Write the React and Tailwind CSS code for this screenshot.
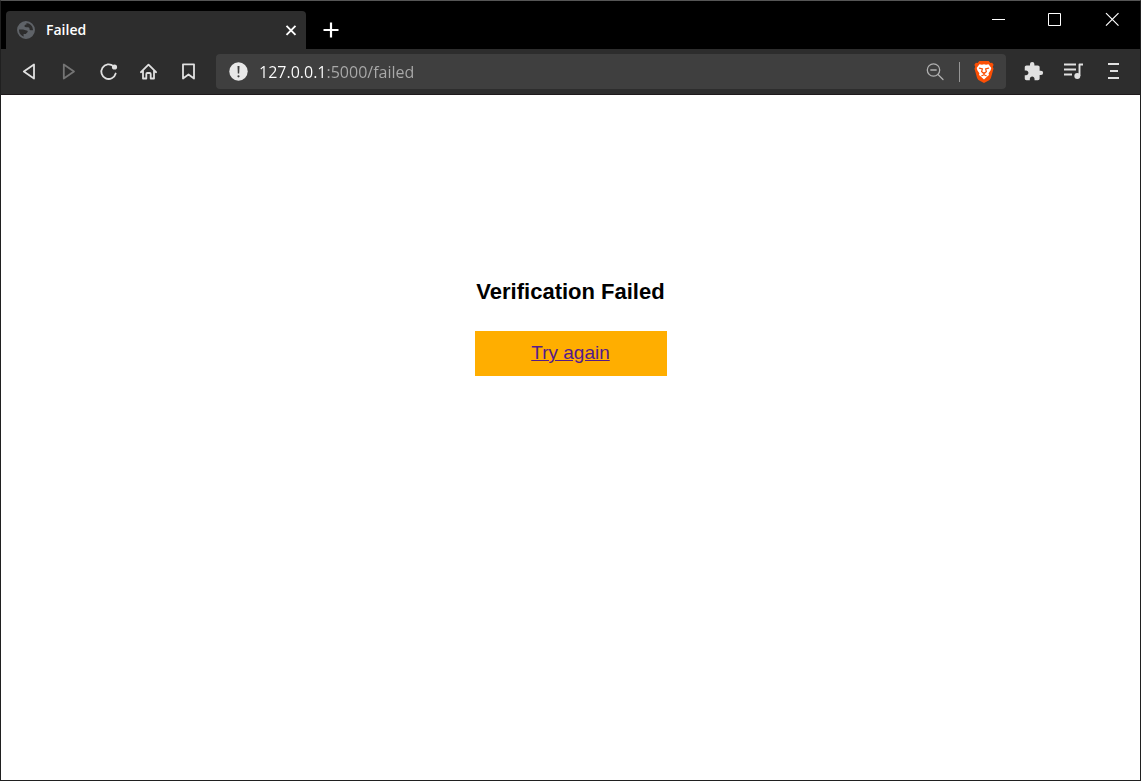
import { MdExtension } from "react-icons/md";

const toolButton = "flex h-9 w-10 shrink-0 items-center justify-center text-[#e0e0e0]";

function Icon({ children }) {
  return (
    <svg
      width="20"
      height="20"
      viewBox="0 0 20 20"
      fill="none"
      stroke="currentColor"
      strokeWidth="1.8"
      strokeLinejoin="round"
      strokeLinecap="round"
      aria-hidden="true"
    >
      {children}
    </svg>
  );
}

function GlobeIcon() {
  return (
    <svg width="20" height="20" viewBox="0 0 20 20" fill="none" aria-hidden="true">
      <circle cx="10" cy="10" r="8" stroke="#5f6368" strokeWidth="1.900" />
      <path
        fill="#5f6368"
        d="M10.500 1.800C5.500 1.500 2 5 1.900 9.600H7c1.500 0 2.200 1 3.600 1 1.200 0 1.500.9.800 1.700L9.800 14H7.600v3.600c3.800 1.300 8.500-.8 10-4.700l.4-2.700h-3.500c-.8 0-1-.7-1-1.400 0-1.100-1-1.500-2.300-1.500-1.600 0-2.700-.3-2.700-1.400 0-1 .9-1.500 2-1.500z"
      />
    </svg>
  );
}

function TitleBar() {
  return (
    <div className="flex h-12 justify-between bg-black pl-[5px] text-white">
      <div className="flex items-end">
        <div className="flex h-[38px] w-[300px] items-center rounded-t bg-[#2d2d2d] pl-2.5 pr-1.5">
          <GlobeIcon />
          <span className="ml-2.5 flex-1 text-sm font-semibold">Failed</span>
          <button type="button" aria-label="Close tab" className="flex size-5 items-center justify-center">
            <Icon>
              <path d="M6.500 5.800l9 9M15.500 5.800l-9 9" strokeWidth="1.900" strokeLinecap="butt" />
            </Icon>
          </button>
        </div>
        <button type="button" aria-label="New tab" className="ml-[15px] flex h-[38px] w-5 items-center justify-center">
          <Icon>
            <path d="M10 2.500v15M2.500 10h15" strokeWidth="2.200" strokeLinecap="butt" />
          </Icon>
        </button>
      </div>
      <div className="flex h-[36px]">
        <button type="button" aria-label="Minimize" className="flex w-14 items-center justify-center">
          <svg width="16" height="16" viewBox="0 0 16 16" aria-hidden="true">
            <path d="M0 8.500h13" stroke="currentColor" />
          </svg>
        </button>
        <button type="button" aria-label="Maximize" className="flex w-14 items-center justify-center">
          <svg width="16" height="16" viewBox="0 0 16 16" fill="none" aria-hidden="true">
            <path d="M.5 2.500h12v12h-12z" stroke="currentColor" />
          </svg>
        </button>
        <button type="button" aria-label="Close window" className="flex w-14 items-center justify-center">
          <svg width="16" height="16" viewBox="0 0 16 16" fill="none" aria-hidden="true">
            <path d="M2 2.200l12.500 12.500M14.500 2.200L2 14.700" stroke="currentColor" strokeWidth="1.200" />
          </svg>
        </button>
      </div>
    </div>
  );
}

function BraveLogo() {
  return (
    <svg width="20" height="24" viewBox="0 0 20 24" aria-hidden="true">
      <path
        fill="#fb4f05"
        d="M5.300 1h9.400l1.700 1.900 1.700-.2 1.500 2-.8 2 .7 2-2.600 9.300-1.300 2L10 23 4.400 20l-1.300-2L.5 8.700l.7-2-.8-2 1.500-2 1.700.2z"
      />
      <path
        fill="#fff"
        d="M5.500 4.300L8 4.800l2-.6 2 .6 2.500-.5L17.300 8l-.8 2.400-1.900 2.900.4 1.700-1.800 1.500L10 19.400l-3.200-2.900L5 15l.4-1.700-1.900-2.900L2.700 8z"
      />
      <path
        fill="none"
        stroke="#fb4f05"
        strokeWidth="1.200"
        strokeLinecap="round"
        d="M5.400 8.200l3 .8-.8 2.500 1.600 1.500M14.600 8.200l-3 .8.8 2.500-1.600 1.500M10 12.600v2M7.800 15.700L10 14.800l2.200.9"
      />
    </svg>
  );
}

function Toolbar() {
  return (
    <div className="flex h-[46px] items-center border-b border-[#1e191b] bg-[#2d2d2d] px-[7px]">
      <button type="button" aria-label="Back" className={toolButton}>
        <Icon>
          <path d="M16 2.500v14L5.800 9.500z" />
        </Icon>
      </button>
      <button
        type="button"
        aria-label="Forward"
        disabled
        className="flex h-9 w-10 shrink-0 items-center justify-center text-[#757575]"
      >
        <Icon>
          <path d="M5.800 2.500v14L16 9.500z" />
        </Icon>
      </button>
      <button type="button" aria-label="Reload" className={toolButton}>
        <Icon>
          <path d="M15.500 4.200A7.300 7.300 0 1 0 17.700 11.500" />
          <circle cx="16.500" cy="5" r="2.600" fill="currentColor" stroke="none" />
        </Icon>
      </button>
      <button type="button" aria-label="Home" className={toolButton}>
        <Icon>
          <path d="M5 8.500L2.900 10.200 10.500 2.600l7.600 7.600L16 8.500V16.500h-3.300V12a1 1 0 0 0-1-1H9.300a1 1 0 0 0-1 1v4.500H5V9" />
        </Icon>
      </button>
      <button type="button" aria-label="Bookmark this page" className={toolButton}>
        <Icon>
          <path d="M5 2.300h11v14.200L10.500 12.500 5 16.500z" />
        </Icon>
      </button>
      <div className="ml-2 mr-[7px] flex h-[35px] min-w-0 flex-1 items-center rounded bg-[#3f3f3f] px-3">
        <button type="button" aria-label="View site information" className="shrink-0 text-[#e8e8e8]">
          <svg width="20" height="20" viewBox="0 0 20 20" aria-hidden="true">
            <circle cx="10.500" cy="9.500" r="9.200" fill="currentColor" />
            <path d="M9.500 4h2l-.3 7.500H9.800z" fill="#3f3f3f" />
            <circle cx="10.500" cy="14.300" r="1.100" fill="#3f3f3f" />
          </svg>
        </button>
        <input
          type="text"
          aria-label="Address"
          defaultValue="127.0.0.1:5000/failed"
          spellCheck={false}
          className="ml-[11px] h-[35px] min-w-0 flex-1 bg-[linear-gradient(to_right,#ffffff_67px,#aaaaaa_67px)] bg-clip-text text-base text-transparent caret-white outline-none"
        />
        <button type="button" aria-label="Zoom" className="mr-3.5 text-[#b0b0b0]">
          <Icon>
            <circle cx="8.500" cy="8" r="6.200" strokeWidth="1.300" />
            <path d="M13 12.500l5 5M5.800 8h5.400" strokeWidth="1.300" />
          </Icon>
        </button>
        <span className="mr-3.5 h-5 w-px bg-[#969696]" />
        <button type="button" aria-label="Brave Shields">
          <BraveLogo />
        </button>
      </div>
      <button type="button" aria-label="Extensions" className={toolButton}>
        <MdExtension className="size-[21px]" aria-hidden="true" />
      </button>
      <button type="button" aria-label="Media controls" className={toolButton}>
        <Icon>
          <path d="M1 2.500h12M1 7.500h12M1 12.500h8M16.500 14V2.500H20" strokeWidth="1.900" strokeLinecap="butt" />
          <circle cx="14.300" cy="14" r="3" fill="currentColor" stroke="none" />
        </Icon>
      </button>
      <button type="button" aria-label="Menu" className={toolButton}>
        <Icon>
          <path d="M5 2h11M7 9h8M5 16h11" strokeWidth="2" strokeLinecap="butt" />
        </Icon>
      </button>
    </div>
  );
}

export default function App() {
  return (
    <div className="flex min-h-screen flex-col border border-[#202020] border-t-[#555555] bg-white font-['Open_Sans','Noto_Sans',sans-serif]">
      <header>
        <TitleBar />
        <Toolbar />
      </header>
      <main className="flex flex-1 flex-col items-center pt-[180px] font-['Liberation_Sans',Arial,sans-serif]">
        <div className="w-48 text-center">
          <h1 className="whitespace-nowrap text-[22px] font-bold leading-[34px] text-black">Verification Failed</h1>
          <a
            href="#retry"
            className="mt-[22px] block h-[45px] bg-[#ffae00] text-[19px] leading-[43px] text-[#551a8b] underline"
          >
            Try again
          </a>
        </div>
      </main>
    </div>
  );
}
